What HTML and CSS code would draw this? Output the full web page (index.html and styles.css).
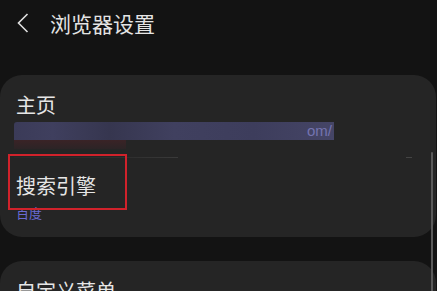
FILE: index.html
```html
<!DOCTYPE html>
<html>
<head>
	<meta charset="utf-8">
	<title>浏览器设置</title>
	<link rel="stylesheet" href="styles.css">
</head>
<body>
	<div class="header">
		<svg class="back" width="14" height="22" viewBox="0 0 14 22">
			<path d="M11.5 2 L2.5 11 L11.5 20" fill="none" stroke="#e0e0e0" stroke-width="1.6"/>
		</svg>
		<div class="title">浏览器设置</div>
	</div>

	<div class="card">
		<div class="label">主页</div>
		<div class="url"><span>om/</span></div>
		<div class="urlShadow"></div>
		<div class="line"><i></i></div>
		<div class="label second">搜索引擎</div>
		<div class="sub">百度</div>
		<div class="redBox"></div>
	</div>

	<div class="card cardNext">
		<div class="label">自定义菜单</div>
	</div>

	<div class="scroll"></div>
</body>
</html>
```

FILE: styles.css
```css
body{
	margin: 0;
	width: 437px;
	height: 291px;
	overflow: hidden;
	background-color: #131313;
	font-family: "Noto Sans CJK SC", "Noto Sans", sans-serif;
	position: relative;
}
.header{
	height: 45px;
	margin-bottom: 30px;
	display: flex;
	align-items: center;
}
.back{
	margin-left: 16px;
	margin-top: 1px;
}
.title{
	margin-left: 20px;
	font-size: 21px;
	line-height: 26px;
	color: #e4e4e4;
}
.card{
	width: 436px;
	box-sizing: border-box;
	background-color: #252525;
	border-radius: 22px;
	padding: 18px 16px 16px 16px;
	position: relative;
}
.label{
	font-size: 20px;
	line-height: 24px;
	color: #e6e6e6;
}
.url{
	margin-top: 5px;
	margin-left: -2px;
	width: 320px;
	height: 18px;
	background: linear-gradient(90deg, #3b3b58 0%, #3f3f5e 12%, #36364f 30%, #40405f 50%, #3d3d5c 75%, #454566 100%);
	position: relative;
	border-radius: 3px 0 0 0;
}
.url span{
	position: absolute;
	right: 2px;
	top: 0;
	font-family: "Liberation Sans", sans-serif;
	font-size: 15px;
	line-height: 18px;
	color: #7474b0;
}
.urlShadow{
	margin-left: -2px;
	width: 112px;
	height: 9px;
	background: linear-gradient(180deg, #3a2326 0%, #2c2426 100%);
}
.line{
	margin-top: 8px;
	height: 1px;
	margin-left: -2px;
	width: 164px;
	background: linear-gradient(90deg, #282828 0%, #2e2e2e 70%, #3a3a3a 100%);
	position: relative;
}
.line i{
	position: absolute;
	left: 392px;
	top: 0;
	width: 6px;
	height: 1px;
	background-color: #444;
}
.second{
	margin-top: 16px;
}
.sub{
	margin-top: 7px;
	font-size: 13px;
	line-height: 16px;
	color: #6a6ad2;
}
.redBox{
	position: absolute;
	left: 8px;
	top: 79px;
	width: 115px;
	height: 52px;
	border: 2px solid #d1222b;
}
.cardNext{
	margin-top: 24px;
	padding-top: 18px;
}
.scroll{
	position: absolute;
	left: 431px;
	top: 152px;
	width: 2px;
	height: 160px;
	border-radius: 2px 2px 0 0;
	background-color: #5a5a5a;
}
```
